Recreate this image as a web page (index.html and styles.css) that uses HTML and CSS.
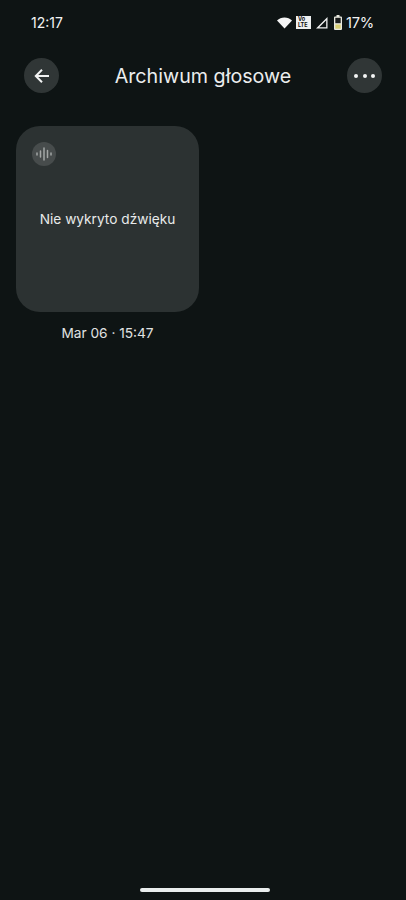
FILE: index.html
```html
<!DOCTYPE html>
<html lang="pl">
<head>
<meta charset="utf-8">
<title>Archiwum głosowe</title>
<link rel="stylesheet" href="styles.css">
</head>
<body>
<div class="screen">
  <div class="status">
    <span class="time">12:17</span>
    <div class="status-icons">
      <svg class="wifi" width="15" height="12" viewBox="0 0 15 12"><path d="M0 3.600C2 1.600 4.600.6 7.500.6s5.500 1 7.500 3L7.500 11.600z" fill="#f4f5f5"/></svg>
      <span class="volte">Vo<br>LTE</span>
      <svg class="signal" width="13" height="13" viewBox="0 0 13 13"><path d="M12.500 1V12.500H1zM11.200 4.200L4.300 11.200h6.900z" fill="#f0f1f1" fill-rule="evenodd"/></svg>
      <svg class="battery" width="8" height="15" viewBox="0 0 8 15"><path d="M2.500 0h3v1.500H7a1 1 0 0 1 1 1V14a1 1 0 0 1-1 1H1a1 1 0 0 1-1-1V2.500a1 1 0 0 1 1-1h1.500z" fill="#e9e9df"/><rect x="1.300" y="2.800" width="5.400" height="5.400" fill="#1a1c1b"/><rect x="1.300" y="9.500" width="5.400" height="4.200" fill="#d9cf72"/></svg>
      <span class="pct">17%</span>
    </div>
  </div>
  <header class="bar">
    <button class="round" aria-label="Wstecz">
      <svg width="18" height="18" viewBox="0 0 18 18"><path d="M16 9H3M9 2.800 2.800 9 9 15.200" fill="none" stroke="#f2f3f3" stroke-width="2"/></svg>
    </button>
    <h1>Archiwum głosowe</h1>
    <button class="round" aria-label="Więcej">
      <span class="dots"><i></i><i></i><i></i></span>
    </button>
  </header>
  <main class="grid">
    <article class="item">
      <div class="card">
        <span class="badge">
          <svg width="16" height="14" viewBox="0 0 16 14"><path d="M1 6v2M4.500 4v6M8 1v12M11.500 3.500v7M15 6v2" stroke="#a3a6a5" stroke-width="1.500" stroke-linecap="round" fill="none"/></svg>
        </span>
        <p class="msg">Nie wykryto dźwięku</p>
      </div>
      <p class="date">Mar 06 · 15:47</p>
    </article>
  </main>
  <div class="home"></div>
</div>
</body>
</html>
```
FILE: styles.css
```css
* { box-sizing: border-box; }
html, body { margin: 0; padding: 0; height: 100%; }
body { background: #0e1414; font-family: Inter, "Noto Sans", sans-serif; color: #ebeded; overflow: hidden; }
.screen { height: 900px; display: flex; flex-direction: column; }
.status { height: 38px; padding: 7px 32px 0 31px; display: flex; justify-content: space-between; align-items: center; }
.time { font-size: 14px; font-weight: 400; color: #f2f3f3; }
.status-icons { display: flex; align-items: center; }
.wifi { margin-right: 4px; }
.volte { width: 15px; height: 13px; background: #eef0f0; color: #111; font-size: 5.500px; font-weight: 700; line-height: 6px; padding: 0 0 0 2px; margin-right: 4px; }
.signal { margin-right: 6px; }
.battery { margin-right: 4px; }
.pct { font-size: 14.700px; color: #f2f3f3; letter-spacing: -.2px; }
.bar { height: 37px; margin-top: 19px; padding: 0 24px; display: flex; align-items: center; justify-content: space-between; }
.bar h1 { margin: 0; font-size: 19.700px; font-weight: 400; color: #ebeded; }
.round { width: 35px; height: 35px; padding: 0; border: 0; border-radius: 50%; background: #303636; display: flex; align-items: center; justify-content: center; }
.dots { display: flex; gap: 4.500px; }
.dots i { width: 4px; height: 4px; border-radius: 50%; background: #f4f5f5; }
.grid { padding: 32px 16px 0; flex: 1; }
.item { width: 183px; }
.card { height: 186px; border-radius: 24px; background: #2c3232; padding: 16px; }
.badge { width: 24px; height: 24px; border-radius: 50%; background: #474c4c; display: flex; align-items: center; justify-content: center; }
.msg { margin: 45px -16px 0; font-size: 13.700px; color: #e8eaea; text-align: center; white-space: nowrap; }
.date { margin: 13px 0 0; font-size: 13.700px; line-height: 17px; text-align: center; color: #e0e2e2; }
.home { width: 130px; height: 4px; border-radius: 2px; background: #e9eded; margin: 0 0 8px 140px; }
```
